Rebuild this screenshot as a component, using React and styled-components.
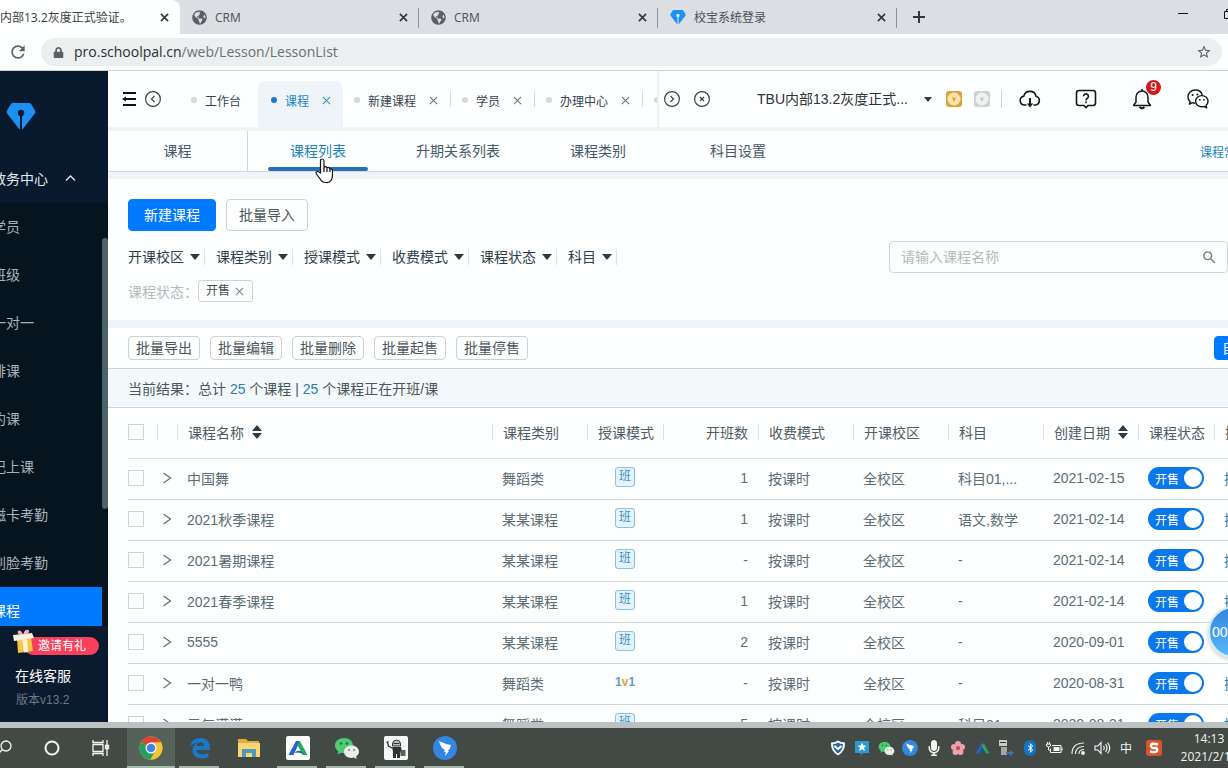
import { useState } from "react"
import styled, { createGlobalStyle, css } from "styled-components"
import { FaGlobeAmericas, FaLock, FaBluetoothB, FaMicrophone } from "react-icons/fa"
import { MdRefresh, MdStarBorder, MdSearch } from "react-icons/md"

const GlobalStyle = createGlobalStyle`
    *, *::before, *::after {
        box-sizing: border-box;
    }
    body {
        margin: 0;
        overflow: hidden;
        background: #fdfefe;
        font-family: "Liberation Sans", "Noto Sans CJK SC", sans-serif;
        font-size: 14px;
        color: #4d5f68;
    }
    button, input, select {
        font: inherit;
        color: inherit;
    }
    button {
        padding: 0;
        border: 0;
        background: none;
        cursor: pointer;
    }
    svg {
        display: block;
        flex: none;
    }
`

const Desktop = styled.div`
    display: flex;
    flex-direction: column;
    height: 100vh;
    overflow: hidden;
    position: relative;
`

/* ---------- browser ---------- */

const TabStrip = styled.div`
    display: flex;
    flex: none;
    height: 34px;
    background: #dbdfe4;
    font-family: "Open Sans", "Noto Sans CJK SC", sans-serif;
    font-size: 12px;
    color: #4a4f55;
    overflow: hidden;
`
const BrowserTab = styled.div`
    display: flex;
    align-items: center;
    gap: 8px;
    flex: none;
    width: ${(p) => (p.$active ? 180 : 239)}px;
    padding: 0 10px 0 ${(p) => (p.$active ? 0 : 12)}px;
    white-space: nowrap;
    position: relative;
    ${(p) => p.$active && css`
        background: #fdfefe;
        border-radius: 0 8px 0 0;
        color: #3b4046;
    `}
    ${(p) => !p.$active && css`
        &::after {
            content: "";
            position: absolute;
            right: 0;
            top: 8px;
            height: 20px;
            width: 1px;
            background: #8d9299;
        }
    `}
`
const TabTitle = styled.span`
    flex: 1;
`
const ChromeButton = styled.button`
    display: flex;
    align-items: center;
    justify-content: center;
    width: ${(p) => p.$w || 12}px;
    height: 100%;
    color: #33383d;
`
const WindowButtons = styled.div`
    display: flex;
    align-items: center;
    gap: 36px;
    margin: 0 -6px 6px auto;
`
const AddressRow = styled.div`
    display: flex;
    align-items: center;
    flex: none;
    height: 37px;
    gap: 14px;
    padding: 0 6px 0 9px;
    border-bottom: 1px solid #ced2d4;
    background: #fdfefe;
    color: #5b6065;
`
const AddressBar = styled.div`
    display: flex;
    align-items: center;
    flex: 1;
    height: 28px;
    padding: 0 10px 0 12px;
    gap: 10px;
    border-radius: 14px;
    background: #ebeff0;
    ${ChromeButton} {
        color: #5b6065;
    }
`
const AddressInput = styled.div`
    flex: 1;
    padding-bottom: 2px;
    font-family: "Open Sans", "Noto Sans", sans-serif;
    font-size: 14px;
    color: #6a7176;
    b {
        font-weight: 400;
        color: #2a2e31;
    }
`

/* ---------- sidebar ---------- */

const Viewport = styled.div`
    display: flex;
    flex: 1;
    min-height: 0;
    overflow: hidden;
    position: relative;
`
const Sidebar = styled.aside`
    display: flex;
    flex-direction: column;
    flex: none;
    width: 108px;
    background: #091a2e;
    color: #a3adb6;
    overflow: hidden;
`
const LogoBox = styled.div`
    height: 84px;
    padding: 30px 0 0 6px;
`
const SectionTitle = styled.button`
    display: flex;
    align-items: center;
    gap: 17px;
    flex: none;
    height: 48px;
    margin-left: -8px;
    padding-bottom: 2px;
    color: #e3e8ec;
    white-space: nowrap;
`
const SubMenu = styled.nav`
    flex: 1;
    min-height: 0;
    overflow: hidden;
    background: #06141f;
    position: relative;
`
const MenuLink = styled.a`
    display: flex;
    align-items: center;
    height: 48px;
    margin: 0 6px 0 -8px;
    padding-bottom: 2px;
    color: ${(p) => (p.$active ? "#fff" : "#a9b2b9")};
    background: ${(p) => (p.$active ? "#007bff" : "transparent")};
    text-decoration: none;
    white-space: nowrap;
`
const MenuScroll = styled.div`
    position: absolute;
    right: 0;
    top: 35px;
    width: 6px;
    height: 271px;
    border-radius: 3px;
    background: #4b6269;
`
const SideFooter = styled.div`
    flex: none;
    height: 96px;
    padding: 3px 9px 0 12px;
    background: #0a1a2f;
`
const Invite = styled.a`
    display: flex;
    align-items: flex-end;
    height: 26px;
    font-size: 12px;
    color: #fff;
    text-decoration: none;
    white-space: nowrap;
    svg {
        position: relative;
        z-index: 1;
    }
    span {
        flex: 1;
        margin-left: -12px;
        padding-left: 14px;
        line-height: 18px;
        border-radius: 9px;
        background: #f8405c;
    }
`
const Service = styled.div`
    margin: 10px 0 4px 3px;
    line-height: 22px;
    color: #fff;
`
const Version = styled.div`
    margin-left: 4px;
    font-size: 12px;
    line-height: 18px;
    color: #6f7984;
`

/* ---------- app header ---------- */

const Main = styled.main`
    display: flex;
    flex-direction: column;
    flex: 1;
    min-width: 0;
    overflow: hidden;
    background: #fdfefe;
`
const Header = styled.header`
    display: flex;
    align-items: center;
    flex: none;
    height: 56px;
    padding: 0 18px 0 14px;
    color: #333b41;
`
const IconButton = styled.button`
    display: flex;
    align-items: center;
    justify-content: center;
    flex: none;
    position: relative;
    width: ${(p) => p.$w || 24}px;
    height: 24px;
`
const PageTabs = styled.div`
    display: flex;
    flex: 0 1 479px;
    align-self: stretch;
    align-items: flex-end;
    margin-left: 10px;
    overflow: hidden;
    font-size: 12px;
    border-right: 2px solid #eef1f4;
`
const PageTab = styled.div`
    display: flex;
    align-items: center;
    flex: none;
    height: 46px;
    padding: 0 12px 8px 11px;
    white-space: nowrap;
    position: relative;
    color: #34444f;
    ${(p) => p.$fixed && css`
        padding-right: 17px;
    `}
    ${(p) => p.$active && css`
        padding: 0 12px 8px 13px;
        border-radius: 8px 8px 0 0;
        background: #eff4f9;
        color: #1a87c9;
    `}
    ${(p) => !p.$active && !p.$fixed && css`
        padding-right: 13px;
        &::after {
            content: "";
            position: absolute;
            right: 0;
            top: 10px;
            width: 1px;
            height: 16px;
            background: #d5dade;
        }
    `}
`
const Dot = styled.i`
    width: 6px;
    height: 6px;
    margin-right: 8px;
    border-radius: 50%;
    background: ${(p) => (p.$active ? "#1f77d0" : "#d5d9dd")};
`
const CloseButton = styled.button`
    display: flex;
    margin-left: 13px;
    color: ${(p) => (p.$active ? "#3f93c8" : "#70787e")};
`
const PagerButtons = styled.div`
    display: flex;
    gap: 6px;
    margin-left: 1px;
`
const HeaderTools = styled.div`
    display: flex;
    align-items: center;
    margin-left: auto;
`
const CampusSelect = styled.select`
    width: 167px;
    appearance: none;
    padding: 0;
    border: 0;
    background: none;
    color: #2b3237;
    text-overflow: ellipsis;
    font-size: 14px;
`
const Caret = styled.i`
    flex: none;
    border: ${(p) => p.$s || 5}px solid transparent;
    border-top: ${(p) => (p.$s || 5) + 1}px solid #2d3b44;
    border-bottom: 0;
    pointer-events: none;
`
const Medals = styled.div`
    display: flex;
    gap: 10px;
    padding: 0 10px 0 13px;
    margin-right: 16px;
    border-right: 1px solid #cfd4d8;
`
const ToolIcons = styled.div`
    display: flex;
    gap: 32px;
`
const Badge = styled.span`
    position: absolute;
    right: -7px;
    top: -7px;
    width: 15px;
    height: 15px;
    border-radius: 50%;
    background: #d0191f;
    color: #fff;
    font-size: 12px;
    line-height: 15px;
    text-align: center;
`

/* ---------- page body ---------- */

const Page = styled.div`
    display: flex;
    flex-direction: column;
    width: calc(100% + 78px);
    background: #fdfefe;
`
const Gutter = styled.div`
    flex: none;
    height: ${(p) => p.$h}px;
    background: #eff4f8;
`
const SubTabs = styled.nav`
    display: flex;
    align-items: center;
    height: 41px;
    padding-right: 34px;
    border-bottom: 1px solid #d3dade;
`
const SubTab = styled.a`
    display: flex;
    align-items: center;
    justify-content: center;
    align-self: stretch;
    position: relative;
    width: 140px;
    padding-bottom: 2px;
    color: ${(p) => (p.$active ? "#1b85b8" : "#44596a")};
    text-decoration: none;
    ${(p) => p.$first && css`
        border-right: 1px solid #cfd5d9;
    `}
    ${(p) => p.$active && css`
        &::after {
            content: "";
            position: absolute;
            left: 20px;
            right: 20px;
            bottom: 0;
            height: 4px;
            border-radius: 2px;
            background: #2273bb;
        }
    `}
`
const HelpLink = styled.a`
    margin-left: auto;
    font-size: 12px;
    color: #1b85b8;
    text-decoration: none;
`
const FilterPanel = styled.section`
    padding: 20px 20px 18px;
`
const Row = styled.div`
    display: flex;
    align-items: center;
    gap: 10px;
`
const Button = styled.button`
    height: 32px;
    padding: 0 12px 2px;
    border: 1px solid #cdd1d4;
    border-radius: 4px;
    white-space: nowrap;
    background: #fdfefe;
    color: #4c565d;
    ${(p) => p.$primary && css`
        padding: 0 15px 2px;
        border-color: #007bff;
        background: #007bff;
        color: #fff;
    `}
    ${(p) => p.$small && css`
        height: 24px;
        padding: 0 7px;
        line-height: 20px;
    `}
`
const FilterRow = styled.div`
    display: flex;
    align-items: center;
    gap: 11px;
    margin-top: 10px;
`
const FilterField = styled.div`
    display: flex;
    align-items: center;
    gap: 6px;
    padding-right: 4px;
    border-right: 1px solid #dfe3e6;
    height: 16px;
`
const FilterSelect = styled.select`
    appearance: none;
    padding: 0;
    border: 0;
    background: none;
    color: #2f3f49;
    line-height: 20px;
`
const SearchBox = styled.div`
    display: flex;
    align-items: center;
    width: 339px;
    height: 32px;
    margin-left: auto;
    margin-right: 58px;
    padding: 0 9px 0 11px;
    border: 1px solid #d3d7da;
    border-radius: 4px;
    color: #747c81;
    input {
        flex: 1;
        min-width: 0;
        border: 0;
        padding: 0;
        outline: 0;
        background: none;
    }
    input::placeholder {
        color: #b4babd;
    }
`
const TagRow = styled.div`
    display: flex;
    align-items: center;
    margin-top: 7px;
    color: #b5babd;
`
const Tag = styled.span`
    display: flex;
    align-items: center;
    height: 22px;
    padding: 0 8px 0 7px;
    border: 1px solid #cfd3d5;
    border-radius: 3px;
    font-size: 12px;
    line-height: 18px;
    color: #434d54;
    button {
        margin-left: 5px;
        color: #7d868b;
    }
`
const BatchBar = styled.div`
    display: flex;
    gap: 10px;
    padding: 8px 20px;
    border-bottom: 1px solid #c9d5da;
    & > :last-child {
        margin-left: auto;
    }
`
const Summary = styled.p`
    margin: 0;
    padding: 0 20px;
    height: 39px;
    line-height: 40px;
    background: #f3f9fa;
    border-bottom: 1px solid #c9d5da;
    color: #4a565d;
    b {
        font-weight: 400;
        color: #2c7fa9;
    }
`

const TableWrap = styled.div`
    padding: 0 20px;
`
const Table = styled.table`
    width: 100%;
    table-layout: fixed;
    border-collapse: separate;
    border-spacing: 0;
    th, td {
        padding: 0 0 2px;
        text-align: left;
        white-space: nowrap;
    }
    th {
        height: 51px;
        font-weight: 400;
        color: #4f5c63;
        border-bottom: 1px solid #dfe4e6;
    }
    td {
        height: 41px;
        padding-left: 10px;
        padding-right: 10px;
        color: #5b6d75;
        border-bottom: 1px solid #ccdadf;
    }
    td:nth-child(-n + 2) {
        padding: 0 0 2px;
    }
`
const HeadCell = styled.div`
    display: flex;
    align-items: center;
    justify-content: ${(p) => (p.$right ? "flex-end" : "flex-start")};
    gap: 8px;
    height: 16px;
    padding: 0 10px;
    border-left: 1px solid #dee2e4;
`
const CountCell = styled.td`
    && {
        text-align: right;
    }
`
const ModeCell = styled.td`
    && {
        padding: 0 0 4px;
    }
    & > * {
        margin: 0 auto;
    }
`
const Check = styled.input`
    display: block;
    appearance: none;
    width: 16px;
    height: 16px;
    margin: 0;
    border: 1px solid #cfd4d6;
    background: #fdfefe;
    &:checked {
        background: #007bff;
    }
`
const Expand = styled.button`
    display: block;
    margin-left: 5px;
    color: #65727a;
`
const ClassMark = styled.span`
    display: block;
    width: 20px;
    height: 20px;
    border: 1px solid #8cc0dc;
    border-radius: 3px;
    background: #e2f3fb;
    color: #3e8fbb;
    font-size: 12px;
    line-height: 17px;
    text-align: center;
`
const OneMark = styled.span`
    display: block;
    width: 20px;
    font-size: 12px;
    font-weight: 700;
    line-height: 16px;
    text-align: center;
    color: #5a9fc4;
    b {
        color: #e2a23c;
    }
`
const Switch = styled.label`
    display: flex;
    align-items: center;
    width: 56px;
    height: 22px;
    padding: 0 2px 0 7px;
    border-radius: 11px;
    background: #0a78ea;
    color: #fff;
    font-size: 12px;
    position: relative;
    input {
        position: absolute;
        inset: 0;
        margin: 0;
        opacity: 0;
    }
    &::after {
        content: "";
        width: 18px;
        height: 18px;
        margin-left: auto;
        border-radius: 50%;
        background: #fdfefe;
    }
`
const ActionLink = styled.a`
    color: #2c7fa9;
    text-decoration: none;
`

/* ---------- overlays ---------- */

const Pointer = styled.svg`
    position: absolute;
    left: 315px;
    top: 158px;
`
const Recorder = styled.div`
    position: absolute;
    right: -32px;
    top: 606px;
    display: flex;
    align-items: center;
    width: 52px;
    height: 52px;
    padding-left: 2px;
    border: 2px solid #d8ebf8;
    border-radius: 50%;
    background: linear-gradient(#3585e0, #58b8f5);
    box-shadow: 0 2px 4px rgba(0, 0, 0, 0.2);
    color: #fff;
    font-size: 14px;
    white-space: nowrap;
`

/* ---------- taskbar ---------- */

const WindowEdge = styled.div`
    flex: none;
    height: 6px;
    background: #bcc1c1;
`
const Taskbar = styled.footer`
    display: flex;
    flex: none;
    height: 40px;
    background: #434a45;
    color: #f2f4f2;
    font-family: "Open Sans", "Noto Sans CJK SC", sans-serif;
    font-size: 12px;
    overflow: hidden;
`
const SystemButtons = styled.div`
    display: flex;
    margin-left: -20px;
    padding-right: 3px;
`
const TaskButton = styled.button`
    display: flex;
    align-items: center;
    justify-content: center;
    flex: none;
    width: ${(p) => p.$w || 49}px;
    position: relative;
    background: ${(p) => (p.$active ? "#566159" : "none")};
    ${(p) => p.$open && css`
        &::after {
            content: "";
            position: absolute;
            left: ${p.$active ? 0 : 4}px;
            right: ${p.$active ? 0 : 5}px;
            bottom: 0;
            height: 2px;
            background: #a7b9ad;
        }
    `}
`
const Tray = styled.div`
    display: flex;
    margin-left: auto;
    & > button:last-child {
        margin-left: 4px;
    }
`
const Clock = styled.div`
    width: 58px;
    margin: 2px -10px 0 14px;
    line-height: 18px;
    text-align: center;
    white-space: nowrap;
`

/* ---------- drawings ---------- */

const Cross = ({ size = 10, width = 1.2 }) => (
    <svg width={size} height={size} viewBox="0 0 10 10" fill="none" stroke="currentColor" strokeWidth={width}>
        <path d="M1 1l8 8M9 1L1 9" />
    </svg>
)

const Diamond = ({ size, hole = "#091a2e" }) => (
    <svg width={size} height={size} viewBox="0 0 30 28">
        <path d="M7 1h16q1.5 0 2.3 1.3l3.8 6.4q.8 1.5-.3 2.8L16.500 27.500h-3L1.200 11.500q-1.100-1.300-.3-2.800l3.800-6.400Q5.500 1 7 1z" fill="#1c90f3" />
        <circle cx="15" cy="11" r="3.200" fill={hole} />
        <path d="M14 12h2v16h-2z" fill={hole} />
    </svg>
)

const Sorter = () => (
    <svg width="10" height="14" viewBox="0 0 10 14" fill="#2d3b44">
        <path d="M5 0l5 6H0zM5 14l5-6H0z" />
    </svg>
)

const CircleIcon = ({ d }) => (
    <svg width="18" height="18" viewBox="0 0 18 18" fill="none" stroke="#3c4348" strokeWidth="1.200">
        <circle cx="9" cy="9" r="7.400" />
        <path d={d} />
    </svg>
)

const Medal = ({ edge, fill, ink }) => (
    <svg width="18" height="18" viewBox="0 0 18 18">
        <rect x="1" y="1" width="16" height="16" rx="3" fill={edge} />
        <circle cx="9" cy="9" r="6.500" fill={fill} />
        <path d="M7 7l2 1 2-1-1 3-1 2-1-2z" fill={ink} />
    </svg>
)

const WechatOutline = () => (
    <svg width="22" height="20" viewBox="0 0 22 20" fill="none" stroke="#15181a" strokeWidth="1.400" strokeLinejoin="round">
        <path d="M8.200 14.200q-1.600 0-2.900-.5L2.500 15.200l.6-2.700A6.400 6.400 0 0 1 .9 7.700C.9 4 4.200 1 8.200 1c3.600 0 6.500 2.300 7.200 5.300" />
        <path d="M14.800 6.600c-3.500 0-6.200 2.500-6.200 5.600s2.700 5.600 6.200 5.600q1.200 0 2.300-.4l2.500 1.400-.5-2.500A5.300 5.300 0 0 0 21 12.200c0-3.100-2.700-5.600-6.200-5.600z" />
        <g fill="#15181a" stroke="none">
            <circle cx="5.600" cy="6" r="1" />
            <circle cx="10.400" cy="5.500" r="1" />
            <circle cx="12.800" cy="10.800" r=".9" />
            <circle cx="16.900" cy="10.800" r=".9" />
        </g>
    </svg>
)

const GiftIcon = () => (
    <svg width="24" height="26" viewBox="0 0 24 26">
        <path d="M5 9l14-1 2 14-15 2z" fill="#f7c742" />
        <path d="M10 9h5l1 14-4 .500z" fill="#fdf3d8" />
        <path d="M1 6l19-2 2 5L2 12z" fill="#fff1e6" />
        <path d="M11 6Q4 5 6 2q3-2 5 4Q13-1 17 1.500 18 5 11 6z" fill="#f7b5b8" />
    </svg>
)

const WechatColor = ({ size }) => (
    <svg width={size} height={size} viewBox="0 0 26 24">
        <path d="M10 2C5 2 1 5 1 9.500c0 2.500 1.400 4.500 3.400 5.900L3.500 18.500l3.600-1.800c1 .3 1.900.4 2.900.4 5 0 9-3.200 9-7.600S15 2 10 2z" fill="#4dcb73" />
        <circle cx="7" cy="7.500" r="1.200" fill="#2b6b3d" />
        <circle cx="13" cy="7.500" r="1.200" fill="#2b6b3d" />
        <path d="M17.500 9.500c-4.200 0-7.500 2.700-7.500 6.200s3.300 6.200 7.500 6.200c.9 0 1.700-.1 2.500-.4l2.800 1.500-.7-2.700c1.800-1.100 2.900-2.700 2.900-4.600 0-3.500-3.300-6.200-7.500-6.200z" fill="#e8eeea" />
        <circle cx="15" cy="14" r="1" fill="#77827a" />
        <circle cx="20" cy="14" r="1" fill="#77827a" />
    </svg>
)

const ChromeIcon = () => (
    <svg width="24" height="24" viewBox="0 0 24 24">
        <circle cx="12" cy="12" r="11.500" fill="#f5c435" />
        <path d="M12 12L2 6.200A11.500 11.500 0 0 1 22 6.500H12z" fill="#dc4437" />
        <path d="M12 12l-10-5.800A11.500 11.500 0 0 0 11.500 23.500L17 14z" fill="#22a060" />
        <path d="M12 6.500h10A11.500 11.500 0 0 1 11.500 23.500L17 14z" fill="#f5c435" />
        <circle cx="12" cy="12" r="5.500" fill="#fff" />
        <circle cx="12" cy="12" r="4.300" fill="#4383e6" />
    </svg>
)

const EdgeIcon = () => (
    <svg width="22" height="22" viewBox="0 0 22 22" fill="#1a78c8">
        <path d="M1 10C2 4 6 1 11.500 1 17.500 1 21 5 21 10.500V13H7.500c.3 3 2.700 4.300 6 4.300 2.300 0 4.300-.6 6-1.600v4.200c-2 1-4.400 1.600-7 1.600C7 21.500 3.500 18 3.500 13.300 3.500 9.500 5.600 7 9 5.600 5.600 6 2.600 7.500 1 10zm6.700-1H15c0-2.300-1.300-3.700-3.500-3.700S8.200 6.700 7.700 9z" />
    </svg>
)

const FolderIcon = () => (
    <svg width="22" height="20" viewBox="0 0 22 20">
        <path d="M0 1h8l2 2h11v16H0z" fill="#e5a93a" />
        <path d="M0 5h22v14H0z" fill="#f8d675" />
        <path d="M4 19v-8h14v8h-4v-4H8v4z" fill="#4c9ac0" />
    </svg>
)

const PeakIcon = ({ size, tile }) => (
    <svg width={size} height={size} viewBox="0 0 24 24">
        {tile && <rect width="24" height="24" rx="2" fill="#fbfdfc" />}
        <path d="M10 5h4L7.500 19H2.500z" fill="#2261d2" />
        <path d="M14 5l7.500 14h-4.500L11 8.500z" fill="#23ae5d" />
        <path d="M8.500 17q4-4 7.500-1l2 3q-4.500-3.500-9.500-2z" fill="#20568e" />
    </svg>
)

const RobotIcon = () => (
    <svg width="24" height="24" viewBox="0 0 24 24">
        <rect width="24" height="24" rx="2" fill="#f6f8f7" />
        <path d="M8.500 8a4 4 0 0 1 8 0v2h-8z" fill="#b9bdbb" stroke="#333" />
        <path d="M9.500 7.500h6" stroke="#333" />
        <path d="M8 11h9l1 4-2 2v5h-3v-4h-1v4H9v-6z" fill="#303331" />
        <path d="M8 12L4.500 10 3.500 6M2.500 6.500l2-1" fill="none" stroke="#303331" strokeWidth="1.300" />
        <rect x="16.500" y="14" width="5" height="6" fill="#5b5f5d" />
    </svg>
)

const BirdIcon = ({ size }) => (
    <svg width={size} height={size} viewBox="0 0 24 24">
        <circle cx="12" cy="12" r="12" fill="#3486e2" />
        <path d="M6 5q6 3 12 4-.5 4-3.500 6h1.500l-4 5 .8-4H11l1-2Q7.500 12 6 5z" fill="#fff" />
    </svg>
)

const Svg20 = ({ children }) => (
    <svg width="20" height="20" viewBox="0 0 20 20" fill="none" stroke="#f4f6f4" strokeWidth="1.300">
        {children}
    </svg>
)

/* ---------- data ---------- */

const menu = ["学员", "班级", "一对一", "排课", "约课", "记上课", "磁卡考勤", "刷脸考勤", "课程"]
const filters = ["开课校区", "课程类别", "授课模式", "收费模式", "课程状态", "科目"]
const batch = ["批量导出", "批量编辑", "批量删除", "批量起售", "批量停售"]
const subTabs = ["课程", "课程列表", "升期关系列表", "课程类别", "科目设置"]
const pageTabs = ["工作台", "课程", "新建课程", "学员", "办理中心"]
const columns = [29, 20, null, 95, 76, 95, 95, 95, 95, 95, 76, 72]
const courses = [
    ["中国舞", "舞蹈类", "班", "1", "科目01,...", "2021-02-15"],
    ["2021秋季课程", "某某课程", "班", "1", "语文,数学", "2021-02-14"],
    ["2021暑期课程", "某某课程", "班", "-", "-", "2021-02-14"],
    ["2021春季课程", "某某课程", "班", "1", "-", "2021-02-14"],
    ["5555", "某某课程", "班", "2", "-", "2020-09-01"],
    ["一对一鸭", "舞蹈类", "1v1", "-", "-", "2020-08-31"],
    ["元气满满", "舞蹈类", "班", "5", "科目01,...", "2020-08-31"],
]

function Browser() {
    return (
        <>
            <TabStrip>
                <BrowserTab $active>
                    <TabTitle>内部13.2灰度正式验证。</TabTitle>
                    <ChromeButton aria-label="关闭标签页"><Cross size={9} width={1.8} /></ChromeButton>
                </BrowserTab>
                {["CRM", "CRM", "校宝系统登录"].map((title, i) => (
                    <BrowserTab key={i}>
                        {i < 2 ? <FaGlobeAmericas size={15} color="#5a6066" /> : <Diamond size={16} hole="#dbeefc" />}
                        <TabTitle>{title}</TabTitle>
                        <ChromeButton aria-label="关闭标签页"><Cross size={9} width={1.8} /></ChromeButton>
                    </BrowserTab>
                ))}
                <ChromeButton $w={44} aria-label="新标签页">
                    <svg width="12" height="12" viewBox="0 0 12 12" stroke="currentColor" strokeWidth="2"><path d="M6 0v12M0 6h12" /></svg>
                </ChromeButton>
                <WindowButtons>
                    <ChromeButton $w={10} aria-label="最小化">
                        <svg width="10" height="2" viewBox="0 0 10 2"><path d="M0 0h10v1H0z" fill="#111" /></svg>
                    </ChromeButton>
                    <ChromeButton $w={10} aria-label="还原">
                        <svg width="10" height="10" viewBox="0 0 10 10" fill="none" stroke="#111"><path d="M.5 2.500h7v7h-7zM2.500 2.500v-2h7v7h-2" /></svg>
                    </ChromeButton>
                </WindowButtons>
            </TabStrip>
            <AddressRow>
                <ChromeButton $w={18} aria-label="刷新"><MdRefresh size={20} color="#5b6065" /></ChromeButton>
                <AddressBar>
                    <FaLock size={11} />
                    <AddressInput><b>pro.schoolpal.cn</b>/web/Lesson/LessonList</AddressInput>
                    <ChromeButton $w={16} aria-label="收藏"><MdStarBorder size={16} /></ChromeButton>
                </AddressBar>
            </AddressRow>
        </>
    )
}

function SideNav() {
    return (
        <Sidebar>
            <LogoBox><Diamond size={30} /></LogoBox>
            <SectionTitle>
                教务中心
                <svg width="11" height="8" viewBox="0 0 11 8" fill="none" stroke="currentColor" strokeWidth="1.300"><path d="M1 6.500l4.500-4.500L10 6.500" /></svg>
            </SectionTitle>
            <SubMenu>
                {menu.map((name) => (
                    <MenuLink key={name} href="#" $active={name === "课程"}>{name}</MenuLink>
                ))}
                <MenuScroll />
            </SubMenu>
            <SideFooter>
                <Invite href="#"><GiftIcon /><span>邀请有礼</span></Invite>
                <Service>在线客服</Service>
                <Version>版本v13.2</Version>
            </SideFooter>
        </Sidebar>
    )
}

function TopBar() {
    return (
        <Header>
            <IconButton $w={14} aria-label="收起菜单">
                <svg width="14" height="16" viewBox="0 0 14 16" stroke="#111" strokeWidth="2" fill="none"><path d="M1 2h13M3 8h11M1 14h13" /><path d="M4 5.500L0 8l4 2.500z" fill="#111" stroke="none" /></svg>
            </IconButton>
            <IconButton $w={34} aria-label="向左"><CircleIcon d="M10.500 6l-3 3 3 3" /></IconButton>
            <PageTabs>
                {pageTabs.map((name, i) => (
                    <PageTab key={name} $active={i === 1} $fixed={i === 0}>
                        <Dot $active={i === 1} />
                        {name}
                        {i > 0 && <CloseButton $active={i === 1} aria-label={"关闭" + name}><Cross size={9} /></CloseButton>}
                    </PageTab>
                ))}
                <PageTab $fixed><Dot /></PageTab>
            </PageTabs>
            <PagerButtons>
                <IconButton aria-label="向右"><CircleIcon d="M7.500 6l3 3-3 3" /></IconButton>
                <IconButton aria-label="关闭全部"><CircleIcon d="M7 7l4 4M11 7l-4 4" /></IconButton>
            </PagerButtons>
            <HeaderTools>
                <CampusSelect aria-label="当前校区">
                    <option>TBU内部13.2灰度正式...</option>
                </CampusSelect>
                <Caret $s={4} />
                <Medals>
                    <Medal edge="#dca23f" fill="#fbe3ac" ink="#e59b3a" />
                    <Medal edge="#cfd1d4" fill="#f0f1f2" ink="#c3c6ca" />
                </Medals>
                <ToolIcons>
                    <IconButton aria-label="下载">
                        <svg width="22" height="20" viewBox="0 0 22 20" fill="none" stroke="#15181a" strokeWidth="1.600">
                            <path d="M7.500 16H5.500a4.500 4.500 0 0 1-.7-8.900A6.300 6.300 0 0 1 17 7.200a4.500 4.500 0 0 1-.5 8.800h-2" />
                            <path d="M11 9v8" strokeWidth="2" />
                            <path d="M7.800 14.500h6.400L11 18.500z" fill="#15181a" stroke="none" />
                        </svg>
                    </IconButton>
                    <IconButton aria-label="帮助">
                        <svg width="22" height="20" viewBox="0 0 22 20" fill="none" stroke="#15181a" strokeWidth="1.600">
                            <path d="M4 1.500h14q2.500 0 2.500 2.500v10q0 2.500-2.500 2.500h-5L11 18.500l-2-2H4q-2.500 0-2.500-2.500V4Q1.500 1.500 4 1.500z" />
                            <path d="M8.600 7.300a2.400 2.400 0 1 1 3.700 2Q11 10 11 11.400M11 12.600v1.600" />
                        </svg>
                    </IconButton>
                    <IconButton aria-label="消息">
                        <svg width="20" height="22" viewBox="0 0 20 22" fill="none" stroke="#15181a" strokeWidth="1.500">
                            <path d="M10 1v2M1.500 17.500h17l-2.500-3.500V9a6 6 0 0 0-12 0v5z" strokeLinejoin="round" />
                            <path d="M7.500 19q2.500 2.500 5 0" strokeWidth="1.800" />
                        </svg>
                        <Badge>9</Badge>
                    </IconButton>
                    <IconButton aria-label="微信"><WechatOutline /></IconButton>
                </ToolIcons>
            </HeaderTools>
        </Header>
    )
}

function CourseRow({ course }) {
    const [name, category, mode, count, subject, date] = course
    const [open, setOpen] = useState(true)
    return (
        <tr>
            <td><Check type="checkbox" aria-label={"选择" + name} /></td>
            <td>
                <Expand aria-label={"展开" + name}>
                    <svg width="10" height="12" viewBox="0 0 10 12" fill="none" stroke="currentColor" strokeWidth="1.300"><path d="M1.500 1l7 5-7 5" /></svg>
                </Expand>
            </td>
            <td>{name}</td>
            <td>{category}</td>
            <ModeCell>{mode === "班" ? <ClassMark>班</ClassMark> : <OneMark>1<b>v</b>1</OneMark>}</ModeCell>
            <CountCell>{count}</CountCell>
            <td>按课时</td>
            <td>全校区</td>
            <td>{subject}</td>
            <td>{date}</td>
            <td>
                <Switch>
                    <input type="checkbox" role="switch" checked={open} onChange={() => setOpen(!open)} />
                    开售
                </Switch>
            </td>
            <td><ActionLink href="#">操作</ActionLink></td>
        </tr>
    )
}

function CourseList() {
    return (
        <Page>
            <Gutter $h={4} />
            <SubTabs>
                {subTabs.map((name, i) => (
                    <SubTab key={name} href="#" $first={i === 0} $active={i === 1}>{name}</SubTab>
                ))}
                <HelpLink href="#">课程常见问题</HelpLink>
            </SubTabs>
            <Gutter $h={7} />
            <FilterPanel>
                <Row>
                    <Button $primary>新建课程</Button>
                    <Button>批量导入</Button>
                </Row>
                <FilterRow>
                    {filters.map((name) => (
                        <FilterField key={name}>
                            <FilterSelect aria-label={name}><option>{name}</option></FilterSelect>
                            <Caret />
                        </FilterField>
                    ))}
                    <SearchBox>
                        <input type="text" placeholder="请输入课程名称" aria-label="课程名称" />
                        <MdSearch size={17} />
                    </SearchBox>
                </FilterRow>
                <TagRow>
                    课程状态：
                    <Tag>开售<button aria-label="移除开售"><Cross size={9} /></button></Tag>
                </TagRow>
            </FilterPanel>
            <Gutter $h={8} />
            <BatchBar>
                {batch.map((name) => <Button key={name} $small>{name}</Button>)}
                <Button $small $primary>自定义列</Button>
            </BatchBar>
            <Summary>当前结果：总计 <b>25</b> 个课程 | <b>25</b> 个课程正在开班/课</Summary>
            <TableWrap>
                <Table>
                    <colgroup>
                        {columns.map((w, i) => <col key={i} style={w ? { width: w } : undefined} />)}
                    </colgroup>
                    <thead>
                        <tr>
                            <th><Check type="checkbox" aria-label="全选" /></th>
                            <th><HeadCell /></th>
                            <th><HeadCell>课程名称 <Sorter /></HeadCell></th>
                            <th><HeadCell>课程类别</HeadCell></th>
                            <th><HeadCell>授课模式</HeadCell></th>
                            <th><HeadCell $right>开班数</HeadCell></th>
                            <th><HeadCell>收费模式</HeadCell></th>
                            <th><HeadCell>开课校区</HeadCell></th>
                            <th><HeadCell>科目</HeadCell></th>
                            <th><HeadCell>创建日期 <Sorter /></HeadCell></th>
                            <th><HeadCell>课程状态</HeadCell></th>
                            <th><HeadCell>操作</HeadCell></th>
                        </tr>
                    </thead>
                    <tbody>
                        {courses.map((course) => <CourseRow key={course[0]} course={course} />)}
                    </tbody>
                </Table>
            </TableWrap>
        </Page>
    )
}

function SystemBar() {
    return (
        <Taskbar>
            <SystemButtons>
                <TaskButton $w={48} aria-label="搜索"><Svg20><circle cx="12" cy="8" r="5" /><path d="M8.500 11.500L3 17" /></Svg20></TaskButton>
                <TaskButton $w={48} aria-label="Cortana"><Svg20><circle cx="10" cy="10" r="6.500" strokeWidth="2" /></Svg20></TaskButton>
                <TaskButton $w={48} aria-label="任务视图"><Svg20><path d="M3 6.500h10v7H3zM3 2v2.500h10V2M3 18v-2.500h10V18M17 2v16M15.500 7.500h3v3h-3z" /></Svg20></TaskButton>
            </SystemButtons>
            <TaskButton $w={48} $active $open aria-label="Chrome"><ChromeIcon /></TaskButton>
            <TaskButton $open aria-label="Edge"><EdgeIcon /></TaskButton>
            <TaskButton aria-label="文件"><FolderIcon /></TaskButton>
            <TaskButton $open aria-label="校宝"><PeakIcon size={24} tile /></TaskButton>
            <TaskButton $open aria-label="微信"><WechatColor size={26} /></TaskButton>
            <TaskButton $open aria-label="助手"><RobotIcon /></TaskButton>
            <TaskButton $open aria-label="钉钉"><BirdIcon size={24} /></TaskButton>
            <Tray>
                <TaskButton $w={24} aria-label="安全">
                    <svg width="16" height="16" viewBox="0 0 16 16"><path d="M1 2.500Q5 2.500 8 .5q3 2 7 2 .5 9-7 13-7.500-4-7-13z" fill="#f3f8fc" /><path d="M3 4q3 0 5-1.500Q10 4 13 4q0 6-5 9.500Q3 10 3 4z" fill="#2c66a0" /><path d="M4.500 6L8 9l3.500-3" fill="none" stroke="#fff" strokeWidth="2" /></svg>
                </TaskButton>
                <TaskButton $w={24} aria-label="星标">
                    <svg width="16" height="16" viewBox="0 0 16 16"><path d="M1 1h14v12H9l-2 2-1-2H1z" fill="#2a9bd0" /><path d="M8 2.500l1.300 3 3.200.2-2.500 2 .9 3.200L8 9.200l-2.900 1.700.9-3.200-2.500-2 3.200-.2z" fill="#fff" /></svg>
                </TaskButton>
                <TaskButton $w={24} aria-label="微信"><WechatColor size={17} /></TaskButton>
                <TaskButton $w={24} aria-label="钉钉"><BirdIcon size={16} /></TaskButton>
                <TaskButton $w={24} aria-label="麦克风"><FaMicrophone size={16} /></TaskButton>
                <TaskButton $w={24} aria-label="花">
                    <svg width="16" height="16" viewBox="0 0 16 16" fill="#efa0a8"><circle cx="8" cy="4" r="3" /><circle cx="12" cy="7" r="3" /><circle cx="10.500" cy="12" r="3" /><circle cx="5.500" cy="12" r="3" /><circle cx="4" cy="7" r="3" /><circle cx="8" cy="8" r="2" fill="#c64f5f" /></svg>
                </TaskButton>
                <TaskButton $w={24} aria-label="校宝"><PeakIcon size={17} /></TaskButton>
                <TaskButton $w={24} aria-label="设备">
                    <svg width="16" height="16" viewBox="0 0 16 16"><path d="M1 0h8v6H1z" fill="#c9cdca" /><path d="M2 2h6v1H2z" fill="#333" /><path d="M3 7h6v8H3z" fill="#a4a8a5" /><path d="M8 12h4v-2l4 3-4 3v-2H8z" fill="#3579bd" /></svg>
                </TaskButton>
                <TaskButton $w={24} aria-label="蓝牙">
                    <svg width="12" height="16" viewBox="0 0 12 16"><rect width="12" height="16" rx="6" fill="#1274c4" /><g transform="translate(1.500 3)"><FaBluetoothB size={10} color="#fff" /></g></svg>
                </TaskButton>
                <TaskButton $w={24} aria-label="电源">
                    <svg width="17" height="14" viewBox="0 0 17 14" fill="none" stroke="#fff"><path d="M6 4.500h9v7H4.500v-4M16 6.500v3" /><path d="M7.500 6h6v4h-6z" fill="#fff" stroke="none" /><path d="M.5 3h4v2q-2 2-4 0zM1.500 1v2M3.500 1v2M2.500 6v3h2" /></svg>
                </TaskButton>
                <TaskButton $w={24} aria-label="网络">
                    <svg width="14" height="14" viewBox="0 0 14 14" fill="none" stroke="#e6e9e7" strokeWidth="1.200"><path d="M1 13Q1 2 13 2M4.500 13Q4.500 5.500 13 5.500M8 13q0-4.500 5-4.500" /><circle cx="12" cy="12" r="1.300" fill="#fff" /></svg>
                </TaskButton>
                <TaskButton $w={24} aria-label="音量">
                    <svg width="17" height="14" viewBox="0 0 17 14" fill="none" stroke="#fff" strokeWidth="1.100"><path d="M1 5h3l3-3.500v11L4 9H1zM9.500 5q1.500 2 0 4M11.500 3q3 4 0 8M13.500 1.500q4.500 5.500 0 11" /></svg>
                </TaskButton>
                <TaskButton $w={24} aria-label="输入法">中</TaskButton>
                <TaskButton $w={24} aria-label="搜狗">
                    <svg width="16" height="16" viewBox="0 0 16 16"><rect width="16" height="16" rx="3" fill="#d9562b" /><path d="M12 4.500Q5 2.500 5 5.500t3.500 2.500T11 11q-1.500 2-7 .5" fill="none" stroke="#fff" strokeWidth="2.400" /></svg>
                </TaskButton>
            </Tray>
            <Clock>14:13<br />2021/2/17</Clock>
        </Taskbar>
    )
}

export default function App() {
    return (
        <Desktop>
            <GlobalStyle />
            <Browser />
            <Viewport>
                <SideNav />
                <Main>
                    <TopBar />
                    <CourseList />
                </Main>
            </Viewport>
            <WindowEdge />
            <SystemBar />
            <Recorder>00:12</Recorder>
            <Pointer width="18" height="26" viewBox="0 0 18 26" fill="#fff" stroke="#111" strokeWidth="1.200" strokeLinejoin="round">
                <path d="M5.500 15V3q0-2 1.700-2T9 3v7q.2-1.500 1.600-1.300T12 10.500q.3-1.300 1.600-1T15 11.500q.3-.8 1.300-.6 1.200.3 1.200 1.800V17q0 3-1.500 5.500T11 24.500q-4 0-5.500-3L1.500 16q-1-1.500.2-2.200T4 14z" />
                <path d="M9 10v4M12 11v3M15 12v2" fill="none" />
            </Pointer>
        </Desktop>
    )
}
